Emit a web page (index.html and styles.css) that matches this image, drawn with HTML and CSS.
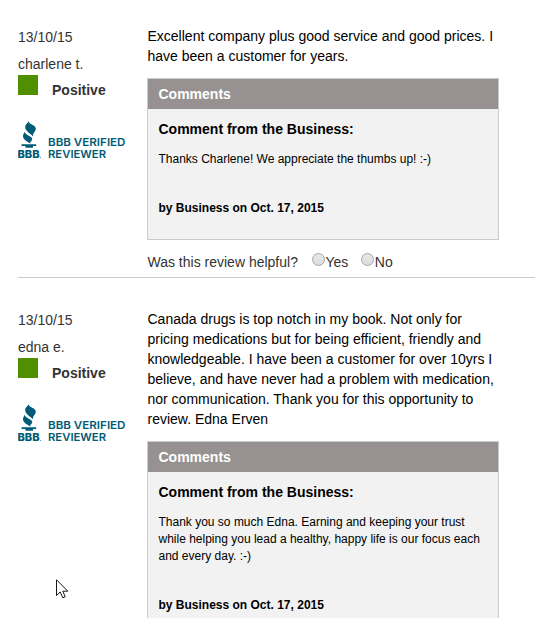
FILE: index.html
```html
<!DOCTYPE html>
<html>
<head>
    <meta charset="utf-8">
    <title>Customer Reviews</title>
    <link rel="stylesheet" href="styles.css">
</head>
<body>
    <div class="reviews">
        <div class="review">
            <div class="reviewer">
                <div class="date">13/10/15</div>
                <div class="name">charlene t.</div>
                <div class="rating"><span class="square"></span><b>Positive</b></div>
                <svg class="verified" width="110" height="40">
                    <path d="M10.8 0.8C9.8 4.5 17.5 4.5 17.8 8.5C18 11.5 14.5 12.5 15 16.5C12.5 13 7.2 11.5 7.2 7C7.2 4 10 3.5 10.8 0.8Z"/>
                    <path d="M6.6 11.5C7 15.5 13.8 15.5 14.2 19C14.3 21 12 21.2 12.2 23.5C9.5 21.5 5 20 5 16C5 14 6.4 13.5 6.6 11.5Z"/>
                    <path d="M3.5 24.3H18.2V26H15V27.8H7.5V26H3.5Z"/>
                    <text class="bbb" x="-0.5" y="37.7" textLength="22" lengthAdjust="spacingAndGlyphs">BBB</text>
                    <circle cx="22.4" cy="37.2" r="0.5"/>
                    <text x="30" y="26" textLength="77.5" lengthAdjust="spacingAndGlyphs">BBB VERIFIED</text>
                    <text x="30" y="38" textLength="58" lengthAdjust="spacingAndGlyphs">REVIEWER</text>
                </svg>
            </div>
            <div class="content">
                <p class="review-text">Excellent company plus good service and good prices. I<br>have been a customer for years.</p>
                <div class="comments">
                    <div class="comments-header">Comments</div>
                    <div class="comments-body">
                        <h4>Comment from the Business:</h4>
                        <p>Thanks Charlene! We appreciate the thumbs up! :-)</p>
                        <p class="byline">by Business on Oct. 17, 2015</p>
                    </div>
                </div>
                <div class="helpful">
                    <span class="question">Was this review helpful?</span>
                    <label><input type="radio" name="helpful1">Yes</label>
                    <label><input type="radio" name="helpful1">No</label>
                </div>
            </div>
        </div>

        <div class="review">
            <div class="reviewer">
                <div class="date">13/10/15</div>
                <div class="name">edna e.</div>
                <div class="rating"><span class="square"></span><b>Positive</b></div>
                <svg class="verified" width="110" height="40">
                    <path d="M10.8 0.8C9.8 4.5 17.5 4.5 17.8 8.5C18 11.5 14.5 12.5 15 16.5C12.5 13 7.2 11.5 7.2 7C7.2 4 10 3.5 10.8 0.8Z"/>
                    <path d="M6.6 11.5C7 15.5 13.8 15.5 14.2 19C14.3 21 12 21.2 12.2 23.5C9.5 21.5 5 20 5 16C5 14 6.4 13.5 6.6 11.5Z"/>
                    <path d="M3.5 24.3H18.2V26H15V27.8H7.5V26H3.5Z"/>
                    <text class="bbb" x="-0.5" y="37.7" textLength="22" lengthAdjust="spacingAndGlyphs">BBB</text>
                    <circle cx="22.4" cy="37.2" r="0.5"/>
                    <text x="30" y="26" textLength="77.5" lengthAdjust="spacingAndGlyphs">BBB VERIFIED</text>
                    <text x="30" y="38" textLength="58" lengthAdjust="spacingAndGlyphs">REVIEWER</text>
                </svg>
            </div>
            <div class="content">
                <p class="review-text">Canada drugs is top notch in my book. Not only for<br>pricing medications but for being efficient, friendly and<br>knowledgeable. I have been a customer for over 10yrs I<br>believe, and have never had a problem with medication,<br>nor communication. Thank you for this opportunity to<br>review. Edna Erven</p>
                <div class="comments">
                    <div class="comments-header">Comments</div>
                    <div class="comments-body">
                        <h4>Comment from the Business:</h4>
                        <p>Thank you so much Edna. Earning and keeping your trust<br>while helping you lead a healthy, happy life is our focus each<br>and every day. :-)</p>
                        <p class="byline">by Business on Oct. 17, 2015</p>
                    </div>
                </div>
            </div>
        </div>
    </div>

    <svg class="cursor" width="13" height="20" viewBox="0 0 13 20">
        <path d="M0.5 0.8V16.5L4.2 13L6.8 18.8L9.2 17.8L6.8 12.2H11.8Z"/>
    </svg>
</body>
</html>
```

FILE: styles.css
```css
html { overflow: hidden; }
body {
    margin: 0;
    height: 618px;
    overflow: hidden;
    position: relative;
    background: #fff;
    color: #333;
    font-family: 'Liberation Sans', Arial, sans-serif;
    font-size: 14px;
    line-height: 20px;
}
p, h4 { margin: 0; }
.reviews {
    height: 618px;
    margin: 0 8px 0 18px;
    overflow: hidden;
}
.review {
    display: flex;
    height: 251px;
    padding-top: 26px;
    border-bottom: 1px solid #ccc;
}
.review + .review { padding-top: 31px; height: 340px; }
.reviewer {
    width: 129px;
    flex-shrink: 0;
    padding-top: 1px;
}
.name { margin-top: 7px; }
.rating {
    display: flex;
    gap: 14px;
    margin-top: 1px;
    height: 20px;
}
.rating b { padding-top: 5px; }
.square {
    width: 20px;
    height: 20px;
    background: #4f8f00;
}
.verified {
    display: block;
    margin-top: 25px;
    overflow: visible;
    fill: #015b76;
    font-family: Inter, sans-serif;
    font-size: 10.8px;
    font-weight: 600;
}
.bbb {
    font-size: 10.8px;
    font-weight: 800;
}
.content { width: 352px; }
.review-text {
    padding-left: 0.5px;
    color: #000;
    white-space: nowrap;
}
.comments {
    margin-top: 12px;
    background: #f2f2f2;
    border: 1px solid #ccc;
    color: #000;
}
.comments-header {
    padding: 5px 10.5px;
    background: #979291;
    color: #fff;
    font-weight: bold;
}
.comments-body {
    padding: 10px 10.5px 22px;
    font-size: 12px;
    line-height: 17px;
    white-space: nowrap;
}
.comments-body h4 {
    margin-bottom: 12px;
    font-size: 14px;
    line-height: 20px;
}
.byline {
    margin-top: 32px;
    font-weight: bold;
}
.helpful {
    display: flex;
    margin-top: 12px;
    padding-left: 0.5px;
}
.question { margin-right: 14px; }
.helpful label {
    display: flex;
    margin-right: 13px;
}
.helpful input {
    appearance: none;
    box-sizing: border-box;
    width: 13px;
    height: 13px;
    margin: 1px 0.5px 0 0;
    border: 1px solid #a5a5a5;
    border-radius: 50%;
    background: linear-gradient(#e8e8e8, #dcdcdc);
}
.cursor {
    position: absolute;
    left: 56px;
    top: 579px;
    fill: #fff;
    stroke: #15151f;
    stroke-width: 1;
}
```
